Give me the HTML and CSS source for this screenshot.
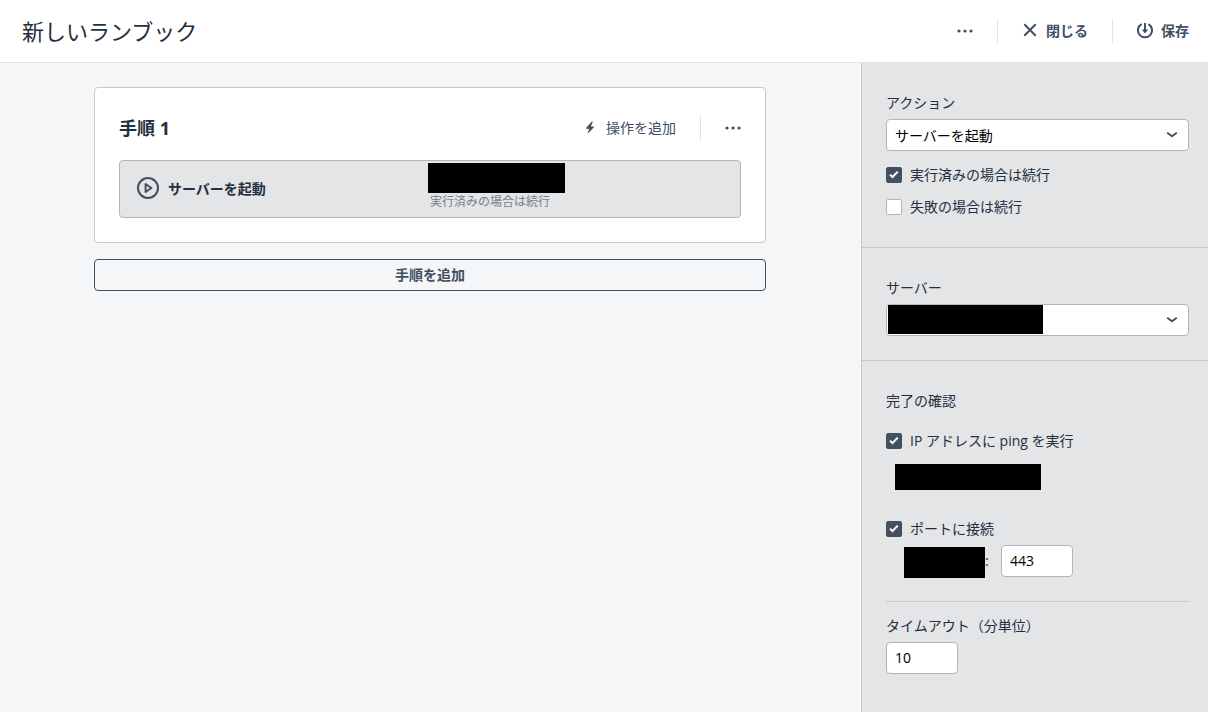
FILE: index.html
```
<!DOCTYPE html>
<html lang="ja">
	<head>
		<meta charset="utf-8">
		<title>新しいランブック</title>
		<link rel="stylesheet" href="styles.css">
	</head>
	<body>
		<header class="topbar">
			<h1>新しいランブック</h1>
			<div class="actions">
				<button class="more" aria-label="その他">
					<svg width="16" height="4" viewBox="0 0 16 4"><circle cx="2" cy="2" r="1.6"/><circle cx="8" cy="2" r="1.6"/><circle cx="14" cy="2" r="1.6"/></svg>
				</button>
				<button class="bold divided">
					<svg class="line" width="16" height="16" viewBox="0 0 16 16"><path d="M2.3 1.3l11.4 11.4M13.7 1.3L2.3 12.7"/></svg>
					閉じる
				</button>
				<button class="bold divided">
					<svg class="line" width="16" height="18" viewBox="0 0 16 18"><path d="M4.6 2.2a7 7 0 1 0 6.8 0M8 1v8"/><path class="solid" d="M4.8 7.6h6.4L8 11.4z"/></svg>
					保存
				</button>
			</div>
		</header>
		<div class="content">
			<main class="steps">
				<section class="card">
					<div class="card-head">
						<h2>手順 1</h2>
						<button class="add">
							<svg width="12" height="14" viewBox="0 0 12 14"><path d="M7.8.4L1.6 7.4l3.6.5L3.4 13 10.4 5.8 6.8 5.2 9 .4z"/></svg>
							操作を追加
						</button>
						<button class="more divided" aria-label="手順のメニュー">
							<svg width="16" height="4" viewBox="0 0 16 4"><circle cx="2" cy="2" r="1.6"/><circle cx="8" cy="2" r="1.6"/><circle cx="14" cy="2" r="1.6"/></svg>
						</button>
					</div>
					<div class="action">
						<div class="action-name">
							<svg class="line" width="24" height="24" viewBox="0 0 24 24"><circle cx="12" cy="11" r="10"/><path d="M9.6 7v8l5.8-4z"/></svg>
							サーバーを起動
						</div>
						<div class="action-info">
							<div class="redacted"></div>
							<p>実行済みの場合は続行</p>
						</div>
					</div>
				</section>
				<button class="add-step">手順を追加</button>
			</main>
			<aside class="panel">
				<section>
					<label for="action">アクション</label>
					<div class="select">
						<select id="action"><option>サーバーを起動</option></select>
						<svg class="line" width="12" height="6" viewBox="0 0 12 6"><path d="M1.2.8L6 4.2 10.8.8"/></svg>
					</div>
					<div class="checks">
						<label class="check"><input type="checkbox" checked>実行済みの場合は続行</label>
						<label class="check"><input type="checkbox">失敗の場合は続行</label>
					</div>
				</section>
				<section>
					<label for="server">サーバー</label>
					<div class="select">
						<select id="server"><option></option></select>
						<div class="redacted"></div>
						<svg class="line" width="12" height="6" viewBox="0 0 12 6"><path d="M1.2.8L6 4.2 10.8.8"/></svg>
					</div>
				</section>
				<section>
					<h3>完了の確認</h3>
					<div class="checks">
						<label class="check"><input type="checkbox" checked>IP アドレスに ping を実行</label>
						<div class="redacted address"></div>
						<label class="check"><input type="checkbox" checked>ポートに接続</label>
					</div>
					<div class="port">
						<div class="redacted"></div>
						<label for="port">:</label>
						<input id="port" type="text" value="443">
					</div>
					<div class="timeout">
						<label for="timeout">タイムアウト（分単位）</label>
						<input id="timeout" type="text" value="10">
					</div>
				</section>
			</aside>
		</div>
	</body>
</html>
```
FILE: styles.css
```
* {
	box-sizing: border-box;
}
body {
	display: flex;
	flex-direction: column;
	min-height: 100vh;
	margin: 0;
	background: #f4f6f8;
	color: #242f40;
	font: 14px/32px "Open Sans", "Noto Sans CJK JP", sans-serif;
}
h1, h2, h3, p {
	margin: 0;
}
h3 {
	font-size: 14px;
	font-weight: normal;
}
button {
	display: flex;
	align-items: center;
	padding: 0;
	border: 0;
	background: none;
	color: #414f5f;
	font: inherit;
	line-height: 24px;
	cursor: pointer;
}
svg {
	display: block;
	flex: none;
	fill: #414f5f;
}
.line {
	fill: none;
	stroke: #414f5f;
	stroke-width: 2;
	stroke-linejoin: round;
}
.solid {
	fill: #414f5f;
	stroke: none;
}
.bold {
	gap: 8px;
	font-weight: bold;
}
.divided {
	margin-left: 24px;
	padding-left: 24px;
	border-left: 1px solid #dfe2e5;
}
.more {
	height: 24px;
}
.redacted {
	background: #000;
}

.topbar {
	display: flex;
	align-items: center;
	justify-content: space-between;
	height: 63px;
	padding: 0 19px 0 22px;
	border-bottom: 1px solid #e3e5e7;
	background: #fff;
}
.topbar h1 {
	font-size: 22px;
	font-weight: normal;
}
.actions {
	display: flex;
}

.content {
	display: flex;
	flex: 1;
}
.steps {
	flex: 1;
	padding: 24px 95px 24px 94px;
}
.card {
	padding: 24px;
	border: 1px solid #c5c9ce;
	border-radius: 4px;
	background: #fff;
}
.card-head {
	display: flex;
	align-items: center;
	margin-bottom: 16px;
}
.card-head h2 {
	flex: 1;
	font-size: 18px;
}
.add {
	gap: 10px;
}
.action {
	display: grid;
	grid-template-columns: 1fr 1fr;
	height: 58px;
	border: 1px solid #b1b6bc;
	border-radius: 4px;
	background: #e3e5e7;
}
.action-name {
	display: flex;
	align-items: center;
	gap: 8px;
	padding-left: 16px;
	font-weight: bold;
}
.action-info {
	padding-top: 2px;
}
.action-info .redacted {
	width: 137px;
	height: 30px;
	margin-left: -2px;
}
.action-info p {
	color: #767e89;
	font-size: 12px;
	line-height: 18px;
}
.add-step {
	justify-content: center;
	width: 100%;
	height: 32px;
	margin-top: 16px;
	border: 1px solid #414f5f;
	border-radius: 4px;
	font-weight: bold;
}

.panel {
	width: 347px;
	border-left: 1px solid #c5c9ce;
	background: #e3e5e7;
}
.panel section {
	padding: 24px 19px 24px 24px;
	border-bottom: 1px solid #c5c9ce;
}
.panel section:last-child {
	border-bottom: 0;
}
.panel label {
	display: block;
}
.panel select,
.panel input[type=text] {
	display: block;
	height: 32px;
	padding: 0 8px;
	border: 1px solid #b1b6bc;
	border-radius: 4px;
	background: #fff;
	color: #000;
	font: inherit;
}
.panel select {
	width: 100%;
	appearance: none;
}
.panel input[type=text] {
	width: 72px;
}
.select {
	position: relative;
}
.select svg {
	position: absolute;
	top: 13px;
	right: 11px;
	pointer-events: none;
}
.select .redacted {
	position: absolute;
	top: 1px;
	left: 2px;
	width: 155px;
	height: 29px;
}
.checks {
	margin-top: 8px;
}
.panel .check {
	display: flex;
	align-items: center;
	gap: 8px;
}
.check input {
	width: 16px;
	height: 16px;
	margin: 0;
	border: 1px solid #b1b6bc;
	border-radius: 2px;
	background: #fff;
	appearance: none;
}
.check input:checked {
	border-color: #414f5f;
	background: #414f5f url("data:image/svg+xml,%3Csvg xmlns='http://www.w3.org/2000/svg' viewBox='0 0 14 14'%3E%3Cpath d='M3 6.6l2.5 2.4 5.3-5.4' fill='none' stroke='white' stroke-width='2'/%3E%3C/svg%3E");
}
.address {
	width: 146px;
	height: 26px;
	margin: 7px 0 23px 9px;
}
.port {
	display: flex;
	height: 32px;
	padding-left: 18px;
}
.port .redacted {
	width: 81px;
	height: 31px;
	margin-top: 2px;
}
.port label {
	width: 16px;
}
.timeout {
	margin-top: 24px;
	padding-top: 8px;
	border-top: 1px solid #c5c9ce;
}
```
